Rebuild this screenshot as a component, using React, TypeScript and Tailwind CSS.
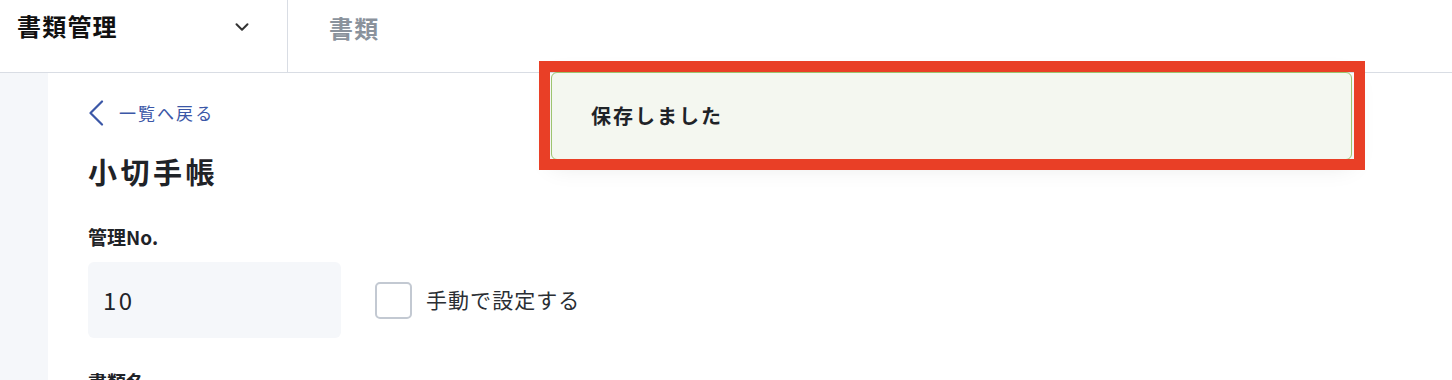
import { ChevronDown } from 'lucide-react'

const FONT = { fontFamily: '"Noto Sans CJK JP", "Noto Sans", sans-serif' }

export default function App() {
  return (
    <div className="relative w-[1452px] h-[380px] overflow-hidden bg-white text-[#1f2328]" style={FONT}>
      {/* Header */}
      <header className="flex h-[73px] border-b border-[#d9dde4]">
        <div className="flex w-[288px] items-start justify-between border-r border-[#d9dde4] pl-[17px] pr-[34px] pt-[10px]">
          <span className="text-[24px] font-bold leading-[32px] tracking-[0.05em] text-[#111]">書類管理</span>
          <ChevronDown className="mt-[6px] h-[22px] w-[22px] text-[#333]" strokeWidth={2.2} />
        </div>
        <div className="flex items-start pl-[41px] pt-[12px]">
          <span className="text-[24px] font-bold leading-[32px] tracking-[0.05em] text-[#8a929c]">書類</span>
        </div>
      </header>

      <div className="flex h-[307px]">
        {/* Sidebar strip */}
        <div className="w-12 shrink-0 bg-[#f5f7fa]" />

        {/* Main */}
        <main className="flex-1 pl-10 pt-[27px]">
          <a className="flex items-center gap-[14px] text-[#3b57a7]">
            <svg width="17" height="26" viewBox="0 0 17 26" fill="none" className="shrink-0">
              <polyline points="14,1.5 2.5,13 14,24.5" stroke="currentColor" strokeWidth="2.2" strokeLinecap="round" strokeLinejoin="round" />
            </svg>
            <span className="text-[17px] tracking-[0.12em]">一覧へ戻る</span>
          </a>
          <h1 className="mt-[25px] text-[29px] font-bold leading-[40px] tracking-[0.12em] text-[#1f2328]">小切手帳</h1>

          <div className="mt-[34px]">
            <label className="block text-[19px] font-bold leading-[24px] text-[#1f2328]">管理No.</label>
            <div className="mt-[13px] flex items-center gap-[34px]">
              <div className="flex h-[76px] w-[253px] items-center rounded-[6px] bg-[#f5f7fa] px-[15px] text-[24px] tracking-[0.1em] text-[#1f2328]">
                10
              </div>
              <label className="flex items-center gap-[14px]">
                <span className="h-[37px] w-[37px] rounded-[5px] border-2 border-[#c3c9d2] bg-white" />
                <span className="text-[21px] tracking-[0.05em] text-[#2a2e33]">手動で設定する</span>
              </label>
            </div>
          </div>

          <div className="mt-[32px] text-[19px] font-bold leading-[24px]">書類名</div>
        </main>
      </div>

      {/* Toast */}
      <div className="absolute left-[551px] top-[72px] flex h-[88px] w-[801px] items-center rounded-[6px] border border-[#9cc46f] bg-[#f4f7f0] pl-[39px] shadow-[0_6px_24px_rgba(0,0,0,0.10)]">
        <span className="text-[20px] font-bold tracking-[0.1em] text-[#1f2328]">保存しました</span>
      </div>

      {/* Highlight frame */}
      <div className="absolute left-[539px] top-[61px] h-[109px] w-[826px] border-[11px] border-[#e93f26]" />
    </div>
  )
}
